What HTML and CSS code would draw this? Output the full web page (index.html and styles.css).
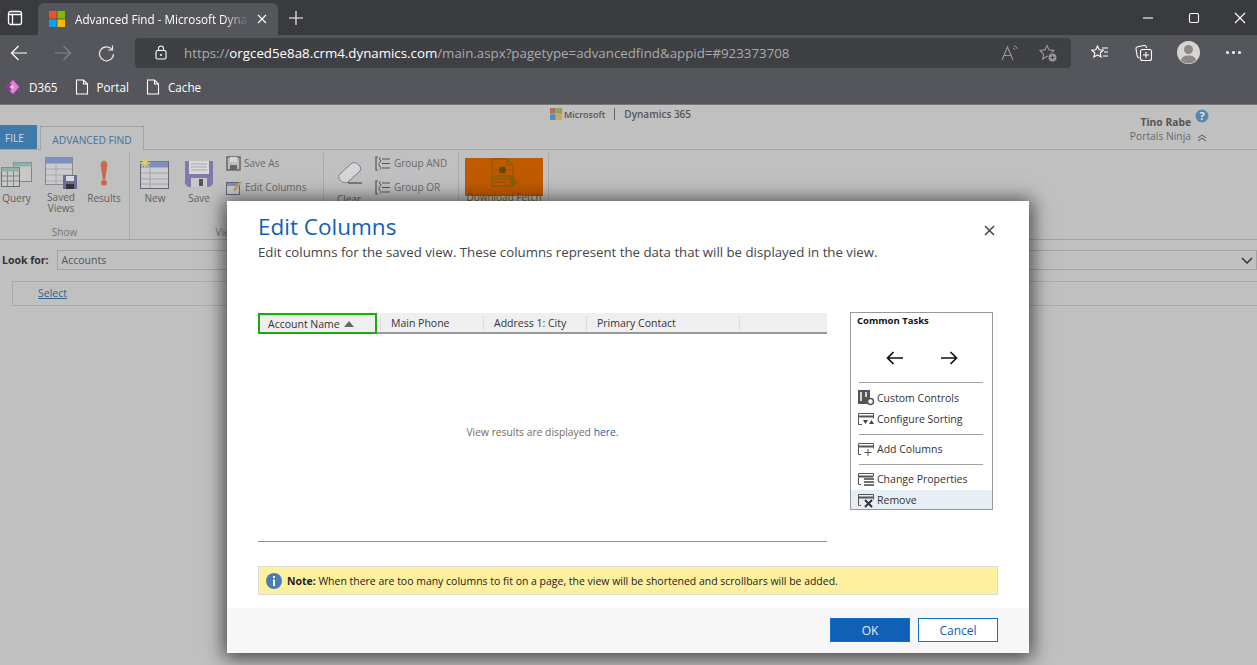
FILE: index.html
```html
<!DOCTYPE html>
<html lang="en">
<head>
<meta charset="utf-8">
<title>Advanced Find - Microsoft Dynamics 365</title>
<link rel="stylesheet" href="styles.css">
</head>
<body>
<div class="browser">
  <div class="tabstrip">
    <svg class="tabs-btn" width="16" height="16" viewBox="0 0 16 16"><rect x="1.5" y="1.5" width="13" height="13" rx="2" fill="none" stroke="#fff" stroke-width="1.3"/><path d="M1.5 4.5h13M5.5 4.5v10" stroke="#fff" stroke-width="1.3" fill="none"/></svg>
    <div class="tab">
      <svg class="favicon" width="16" height="16" viewBox="0 0 16 16"><rect width="7.5" height="7.5" fill="#f25022"/><rect x="8.5" width="7.5" height="7.5" fill="#7fba00"/><rect y="8.5" width="7.5" height="7.5" fill="#00a4ef"/><rect x="8.5" y="8.5" width="7.5" height="7.5" fill="#ffb900"/></svg>
      <span class="tab-title">Advanced Find - Microsoft Dynamics 365</span>
      <svg class="tab-close" width="10" height="10" viewBox="0 0 10 10"><path d="M1 1l8 8M9 1l-8 8" stroke="#fff" stroke-width="1.1"/></svg>
    </div>
    <svg class="newtab" width="16" height="16" viewBox="0 0 16 16"><path d="M8 1v14M1 8h14" stroke="#fff" stroke-width="1.1"/></svg>
    <div class="winctl">
      <svg width="12" height="12" viewBox="0 0 12 12"><path d="M1 6h10" stroke="#fff" stroke-width="1.1"/></svg>
      <svg width="12" height="12" viewBox="0 0 12 12"><rect x="1.5" y="1.5" width="9" height="9" rx="1.5" fill="none" stroke="#fff" stroke-width="1.1"/></svg>
      <svg width="12" height="12" viewBox="0 0 12 12"><path d="M1 1l10 10M11 1L1 11" stroke="#fff" stroke-width="1.1"/></svg>
    </div>
  </div>
  <div class="toolbar">
    <svg class="nav" width="18" height="18" viewBox="0 0 18 18"><path d="M17 9H1.5M8.5 2L1.5 9l7 7" fill="none" stroke="#fff" stroke-width="1.2"/></svg>
    <svg class="nav" width="18" height="18" viewBox="0 0 18 18"><path d="M1 9h15.5M9.5 2l7 7-7 7" fill="none" stroke="#85868a" stroke-width="1.2"/></svg>
    <svg class="nav" width="18" height="18" viewBox="0 0 18 18"><path d="M14.5 1.5V6H10M15.500 10A7 7 0 1 1 14 5.500" fill="none" stroke="#e8e8e8" stroke-width="1.2"/></svg>
    <div class="address">
      <svg class="lock" width="12" height="15" viewBox="0 0 12 15"><rect x="1" y="5.5" width="10" height="8.5" rx="1.5" fill="none" stroke="#fff" stroke-width="1.1"/><path d="M3.5 5.5V3.5a2.5 2.5 0 0 1 5 0v2" fill="none" stroke="#fff" stroke-width="1.1"/><circle cx="6" cy="10" r="1" fill="#fff"/></svg>
      <div class="url"><span class="dim">https://</span><span class="host">orgced5e8a8.crm4.dynamics.com</span><span class="dim">/main.aspx?pagetype=advancedfind&amp;appid=#923373708</span></div>
      <svg class="addr-ic" width="18" height="18" viewBox="0 0 18 18"><path d="M1 16L6.5 3 12 16M3 11.5h7" fill="none" stroke="#99999c" stroke-width="1.1"/><path d="M12 4a3 3 0 0 1 2 2M13 1.5a6 6 0 0 1 3.5 3.5" fill="none" stroke="#99999c" stroke-width="1"/></svg>
      <svg class="addr-ic" width="18" height="18" viewBox="0 0 18 18"><path d="M8 1.500l2.100 4.400 4.900.6-3.600 3.300 1 4.700L8 12.200l-4.400 2.800 1-4.700L1 6.500l4.900-.6z" fill="none" stroke="#99999c" stroke-width="1.1"/><circle cx="13.500" cy="13.500" r="4.500" fill="#99999c" stroke="#3f4044"/><path d="M13.500 11.500v4M11.500 13.500h4" stroke="#3f4044" stroke-width="1"/></svg>
    </div>
    <svg class="tool" width="18" height="18" viewBox="0 0 18 18"><path d="M6.500 2l1.700 3.800 4 .4-3 2.800.9 4-3.600-2-3.600 2 .9-4-3-2.800 4-.4z" fill="none" stroke="#fff" stroke-width="1.1"/><path d="M11 4h6M13 8h4M12 12h5" stroke="#fff" stroke-width="1.1"/></svg>
    <svg class="tool tool-c" width="18" height="18" viewBox="0 0 18 18"><rect x="5.5" y="5.5" width="11" height="11" rx="2" fill="none" stroke="#fff" stroke-width="1.1"/><path d="M11 8v6M8 11h6" stroke="#fff" stroke-width="1.1"/><path d="M4.500 14C3 14 2.500 13 2.200 12L1 5c-.2-1.200.5-2 1.500-2.200L9 1.500c1.200-.2 2 .3 2.300 1.500l.2 1" fill="none" stroke="#fff" stroke-width="1.1"/></svg>
    <svg class="avatar" width="23" height="23" viewBox="0 0 23 23"><circle cx="11.5" cy="11.5" r="11.5" fill="#d6d5d2"/><circle cx="11.5" cy="8.5" r="4.5" fill="#8d8a85"/><path d="M3.800 19.500C5 15.500 8 14.500 11.500 14.500s6.500 1 7.700 5A11.500 11.500 0 0 1 3.800 19.500z" fill="#8d8a85"/></svg>
    <div class="more"><i></i><i></i><i></i></div>
  </div>
  <div class="bookmarks">
    <div class="bm">
      <svg width="16" height="16" viewBox="0 0 16 16"><path d="M8 0l8 8-8 8-8-8z" fill="#8f3a98"/><path d="M5 4l3-3 6 7-6 7-3-3 4-4z" fill="#d987d0"/><path d="M7 5.500L9.500 8 7 10.500 4.500 8z" fill="#eeb4e4"/></svg>
      <span>D365</span>
    </div>
    <div class="bm">
      <svg width="14" height="16" viewBox="0 0 14 16"><path d="M1.500 1h7L12.500 5v10h-11zM8.500 1v4h4" fill="none" stroke="#fff" stroke-width="1.1"/></svg>
      <span>Portal</span>
    </div>
    <div class="bm">
      <svg width="14" height="16" viewBox="0 0 14 16"><path d="M1.500 1h7L12.500 5v10h-11zM8.500 1v4h4" fill="none" stroke="#fff" stroke-width="1.1"/></svg>
      <span>Cache</span>
    </div>
  </div>
</div>

<div class="app">
  <div class="app-top">
    <div class="brand">
      <svg width="12" height="12" viewBox="0 0 12 12"><rect width="5.700" height="5.700" fill="#b66f5c"/><rect x="6.300" width="5.700" height="5.700" fill="#8da25b"/><rect y="6.300" width="5.700" height="5.700" fill="#4d90b6"/><rect x="6.300" y="6.300" width="5.700" height="5.700" fill="#c9a75a"/></svg>
      <span class="ms">Microsoft</span><span class="pipe"></span><span class="d365">Dynamics 365</span>
    </div>
    <div class="user">
      <div class="user-text"><b>Tino Rabe</b><span>Portals Ninja</span></div>
      <div class="user-ic">
        <svg width="14" height="14" viewBox="0 0 14 14"><circle cx="7" cy="7" r="6.5" fill="#5b86ae"/><text x="7" y="10.800" class="qmark" text-anchor="middle">?</text></svg>
        <svg width="10" height="8" viewBox="0 0 10 8"><path d="M1 4l4-3 4 3M1 7l4-3 4 3" fill="none" stroke="#555" stroke-width="1"/></svg>
      </div>
    </div>
  </div>
  <div class="tabrow">
    <div class="t-file">FILE</div>
    <div class="t-adv">ADVANCED FIND</div>
  </div>
  <div class="ribbon">
    <div class="group g-show">
      <div class="g-items">
        <div class="big big-q">
          <svg width="32" height="32" viewBox="0 0 32 32"><rect x="12.5" y="4.5" width="18" height="19" fill="#c8c8c4" stroke="#6f8c88"/><rect x="12.5" y="4.5" width="18" height="4" fill="#8fb0ab"/><rect x=".5" y="9.5" width="18" height="19" fill="#c8c8c4" stroke="#5f7471"/><rect x=".5" y="9.5" width="18" height="4" fill="#8fb0ab"/><path d="M1 18h17M1 23h17M6.500 13v15M12.500 13v15" stroke="#7a8a88" fill="none"/></svg>
          <span>Query</span>
        </div>
        <div class="big big-sv">
          <svg width="33" height="32" viewBox="0 0 33 32"><rect x=".5" y=".5" width="27" height="27" fill="#c9cbcf" stroke="#88898d"/><rect x=".5" y=".5" width="27" height="6" fill="#7e8fbd"/><path d="M1 12h26M1 18h26M1 24h26M11 7v20" stroke="#a9aaae"/><rect x="18" y="18" width="14" height="14" fill="#6d6b9c"/><rect x="21" y="19" width="8" height="5" fill="#d8d8d8"/><rect x="21" y="27" width="8" height="5" fill="#333"/></svg>
          <span>Saved<br>Views</span>
        </div>
        <div class="big big-r">
          <svg width="10" height="27" viewBox="0 0 12 32"><path d="M2 6c0-7 8-7 8 0l-2.500 17h-3z" fill="#c96a4c"/><circle cx="6" cy="27" r="3.500" fill="#c96a4c"/></svg>
          <span>Results</span>
        </div>
      </div>
      <div class="g-label">Show</div>
    </div>
    <div class="group g-view">
      <div class="g-items">
        <div class="big big-n">
          <svg width="30" height="32" viewBox="0 0 30 32"><rect x=".5" y="3.5" width="28" height="27" fill="#c9cbcf" stroke="#667"/><rect x="1" y="3.5" width="27" height="6" fill="#7e8fbd"/><path d="M1 15h27M1 21h27M1 26h27M10 10v20" stroke="#a2a4a8"/><path d="M5 0v10M0 5h10M1.500 1.500l7 7M8.500 1.500l-7 7" stroke="#d8cf72" stroke-width="1.5"/></svg>
          <span>New</span>
        </div>
        <div class="big big-s">
          <svg width="28" height="28" viewBox="0 0 28 28"><path d="M0 1h28v23l-3 3H3l-3-3z" fill="#7d7bab"/><rect x="4" y="1" width="20" height="13" fill="#d8d8d8"/><path d="M6 4h16M6 7h16M6 10h16" stroke="#aaa"/><rect x="6" y="18" width="16" height="9" fill="#c8c8c8"/><rect x="14" y="19" width="4" height="7" fill="#555"/></svg>
          <span>Save</span>
        </div>
        <div class="stack">
          <div class="small">
            <svg width="15" height="15" viewBox="0 0 15 15"><path d="M1 1h13v13H1z" fill="#bdbdbd" stroke="#666" stroke-width="1.5"/><rect x="4" y="1" width="7" height="5" fill="#d5d5d5"/><rect x="4" y="9" width="7" height="5" fill="#666"/></svg>
            <span>Save As</span>
          </div>
          <div class="small">
            <svg width="16" height="15" viewBox="0 0 16 15"><rect x=".5" y="2.5" width="13" height="12" fill="#c6cad2" stroke="#667"/><rect x="1" y="3" width="12" height="3" fill="#7e8fbd"/><path d="M7 10l7-9 2 1.500-7 9z" fill="#c79a5c"/></svg>
            <span>Edit Columns</span>
          </div>
        </div>
      </div>
      <div class="g-label">View</div>
    </div>
    <div class="group g-query">
      <div class="g-items">
        <div class="big big-c">
          <svg width="27" height="26" viewBox="0 0 27 26"><path d="M3 14L16 2c2-1 5 0 7 2s2 5 1 6L12 21c-2 1-5 1-7-1s-3-4-2-6z" fill="#d4d6da" stroke="#7c7e84"/><path d="M12 22h14" stroke="#333"/></svg>
          <span>Clear</span>
        </div>
        <div class="stack">
          <div class="small">
            <svg width="16" height="15" viewBox="0 0 16 15"><path d="M3 1H1v13h2M7 3h8M7 7.500h8M7 12h8" fill="none" stroke="#555" stroke-width="1.2"/><path d="M5.500 1.500C4 1.500 4 4 5.500 4S4 7.500 4 7.500 4 11 5.500 11 4 13.500 5.500 13.500" fill="none" stroke="#555"/></svg>
            <span>Group AND</span>
          </div>
          <div class="small">
            <svg width="16" height="15" viewBox="0 0 16 15"><path d="M3 1H1v13h2M7 3h8M7 7.500h8M7 12h8" fill="none" stroke="#555" stroke-width="1.2"/><path d="M5.500 1.500C4 1.500 4 4 5.500 4S4 7.500 4 7.500 4 11 5.500 11 4 13.500 5.500 13.500" fill="none" stroke="#555"/></svg>
            <span>Group OR</span>
          </div>
        </div>
      </div>
    </div>
    <div class="group g-dl">
      <div class="dl-box">
        <svg width="27" height="30" viewBox="0 0 27 30"><path d="M1 1h15l6 6v21H1zM16 1v6h6" fill="none" stroke="#7a5a00"/><path d="M4 12h2M17 12h2M3 18h17M3 21h17M3 24h12" stroke="#7a5a00"/><circle cx="11.5" cy="12" r="3.5" fill="#5d4b08"/><path d="M19 17c4 0 5 3 5 6h3l-5 6-5-6h3c0-2-1-3-2-3z" fill="#7f6200"/></svg>
        <span>Download Fetch</span>
      </div>
    </div>
  </div>
  <div class="lookfor">
    <b>Look for:</b>
    <div class="lf-select"><span>Accounts</span>
      <svg width="12" height="7" viewBox="0 0 12 7"><path d="M1 1l5 5 5-5" fill="none" stroke="#333" stroke-width="1.5"/></svg>
    </div>
  </div>
  <div class="selectbox"><a class="select-link" href="#">Select</a></div>
</div>

<div class="dialog">
  <div class="d-main">
    <div class="d-head">
      <div>
        <h1>Edit Columns</h1>
        <p>Edit columns for the saved view. These columns represent the data that will be displayed in the view.</p>
      </div>
      <svg class="d-close" width="11" height="11" viewBox="0 0 11 11"><path d="M1 1l9 9M10 1l-9 9" stroke="#444" stroke-width="1.5"/></svg>
    </div>
    <div class="d-body">
      <div class="grid">
        <div class="g-head">
          <div class="col col-a">Account Name <i class="sort"></i></div>
          <div class="col col-b">Main Phone</div>
          <div class="col col-c">Address 1: City</div>
          <div class="col col-d">Primary Contact</div>
        </div>
        <div class="g-empty">View results are displayed <span class="here">here.</span></div>
      </div>
      <div class="tasks">
        <div class="t-title">Common Tasks</div>
        <div class="t-arrows">
          <svg width="18" height="14" viewBox="0 0 18 14"><path d="M17 7H1.500M7.500 1L1.500 7l6 6" fill="none" stroke="#111" stroke-width="1.7"/></svg>
          <svg width="18" height="14" viewBox="0 0 18 14"><path d="M1 7h15.500M10.500 1l6 6-6 6" fill="none" stroke="#111" stroke-width="1.7"/></svg>
        </div>
        <div class="t-sep"></div>
        <div class="t-item">
          <svg width="17" height="16" viewBox="0 0 17 16"><rect width="12" height="14" fill="#555"/><path d="M3 2v9M8 2v5" stroke="#fff" stroke-width="1.5"/><circle cx="12.5" cy="11.5" r="3" fill="#fff" stroke="#555" stroke-width="1.5"/></svg>
          <span>Custom Controls</span>
        </div>
        <div class="t-item">
          <svg width="17" height="16" viewBox="0 0 17 16"><path d="M4 13.500H.5v-11h15v5" fill="none" stroke="#555"/><path d="M1 5.500h14" stroke="#555" stroke-width="2"/><path d="M5 9h5l-2.500 4zM11 13h5l-2.500-4z" fill="#444"/></svg>
          <span>Configure Sorting</span>
        </div>
        <div class="t-sep t-sep2"></div>
        <div class="t-item">
          <svg width="17" height="16" viewBox="0 0 17 16"><path d="M3 13.500H.5v-11h15v5" fill="none" stroke="#555"/><path d="M1 5.500h14" stroke="#555" stroke-width="2"/><path d="M10 8v7M6.500 11.500h7" stroke="#555"/></svg>
          <span>Add Columns</span>
        </div>
        <div class="t-sep t-sep2"></div>
        <div class="t-item">
          <svg width="17" height="16" viewBox="0 0 17 16"><path d="M3 13.500H.5v-11h15v3" fill="none" stroke="#555"/><path d="M1 5.500h14" stroke="#555" stroke-width="2"/><path d="M6 8h10M6 11h10M6 14h10" stroke="#444" stroke-width="1.5"/></svg>
          <span>Change Properties</span>
        </div>
        <div class="t-item t-hover">
          <svg width="17" height="16" viewBox="0 0 17 16"><path d="M3 13.500H.5v-11h15v5" fill="none" stroke="#555"/><path d="M1 5.500h14" stroke="#555" stroke-width="2"/><path d="M7 8l7 7M14 8l-7 7" stroke="#333" stroke-width="2"/></svg>
          <span>Remove</span>
        </div>
      </div>
    </div>
    <div class="note">
      <svg width="16" height="16" viewBox="0 0 16 16"><circle cx="8" cy="8" r="8" fill="#4a7db5"/><rect x="7" y="6.5" width="2" height="6.5" fill="#fff"/><rect x="7" y="3" width="2" height="2" fill="#fff"/></svg>
      <span><b>Note:</b> When there are too many columns to fit on a page, the view will be shortened and scrollbars will be added.</span>
    </div>
  </div>
  <div class="d-foot">
    <button class="btn btn-ok">OK</button>
    <button class="btn btn-cancel">Cancel</button>
  </div>
</div>
</body>
</html>
```

FILE: styles.css
```css
* { box-sizing: border-box; }
html, body { margin: 0; height: 100%; }
body {
  width: 1257px;
  height: 665px;
  overflow: hidden;
  display: flex;
  flex-direction: column;
  background: #c0c0c0;
  font-family: "Open Sans", "Noto Sans", sans-serif;
  position: relative;
}

/* Browser chrome */
.browser { flex: none; color: #fff; }
.tabstrip {
  height: 35px;
  background: #3a3b3f;
  display: flex;
  align-items: center;
  padding: 3px 0 0 7px;
}
.tabs-btn { flex: none; margin-top: -3px; }
.tab {
  width: 240px;
  height: 32px;
  margin-left: 15px;
  background: #55565b;
  border-radius: 6px 6px 0 0;
  display: flex;
  align-items: center;
  padding: 0 11px;
  font-size: 11.7px;
}
.favicon { flex: none; margin-right: 10px; }
.tab-title {
  flex: 1;
  overflow: hidden;
  white-space: nowrap;
  -webkit-mask-image: linear-gradient(to right, #000 85%, transparent);
  mask-image: linear-gradient(to right, #000 85%, transparent);
}
.tab-close { flex: none; margin-left: 8px; }
.newtab { flex: none; margin-left: 10px; margin-top: -3px; }
.winctl { margin-left: auto; margin-top: -3px; display: flex; gap: 34px; padding-right: 11px; }
.toolbar {
  height: 35px;
  background: #55565b;
  display: flex;
  align-items: center;
  padding-left: 10px;
}
.nav { flex: none; margin-right: 26px; }
.address {
  width: 936px;
  height: 30px;
  margin-left: -7px;
  background: #3f4044;
  border-radius: 4px;
  display: flex;
  align-items: center;
  padding: 0 14px 0 20px;
}
.lock { flex: none; margin-right: 17px; }
.url { flex: 1; font-size: 13.3px; white-space: nowrap; }
.dim { color: #aaabae; }
.host { color: #fff; }
.addr-ic { flex: none; margin-left: 20px; }
.tool { flex: none; margin-left: 20px; }
.tool-c { margin-left: 26px; }
.avatar { flex: none; margin-left: 24px; }
.more { display: flex; gap: 3px; margin-left: 26px; }
.more i { width: 3px; height: 3px; background: #fff; border-radius: 50%; display: block; }
.bookmarks {
  height: 35px;
  background: #55565b;
  display: flex;
  align-items: center;
  gap: 17px;
  padding-left: 5px;
  font-size: 11.7px;
  border-bottom: 1px solid #77787b;
}
.bm { display: flex; align-items: center; gap: 8px; }

/* App behind the dialog */
.app { flex: 1; display: flex; flex-direction: column; color: #555; font-size: 10px; min-height: 0; }
.app-top { height: 21px; position: relative; display: flex; justify-content: center; }
.brand { display: flex; align-items: center; height: 18px; margin-left: -16px; }
.ms { font-size: 9px; font-weight: 600; margin-left: 2px; color: #555; }
.pipe { width: 1px; height: 12px; background: #666; margin: 0 9px; }
.d365 { font-size: 10px; font-weight: 600; color: #555; }
.user { position: absolute; right: 48px; top: 4px; display: flex; gap: 4px; }
.user-text { display: flex; flex-direction: column; align-items: flex-end; margin-top: 6px; line-height: 14px; }
.user-text b { color: #555; font-size: 10.3px; }
.user-text span { color: #6a6a6a; font-size: 10.3px; }
.user-ic { display: flex; flex-direction: column; align-items: center; gap: 11px; }
.qmark { font: 700 11px "Open Sans", sans-serif; fill: #d8e2ec; }
.tabrow {
  height: 24px;
  display: flex;
  align-items: flex-end;
  border-bottom: 1px solid #a3a3a3;
  font-size: 10px;
}
.t-file { width: 37px; height: 24px; background: #3f7aab; color: #d6dde4; display: flex; align-items: center; padding: 2px 0 0 5px; }
.t-adv { width: 104px; height: 24px; margin: 0 0 -1px 3px; border: 1px solid #a3a3a3; border-bottom: 0; background: #c0c0c0; color: #41739f; display: flex; align-items: center; justify-content: center; padding-top: 2px; font-size: 10.2px; }
.ribbon { height: 90px; display: flex; border-bottom: 1px solid #a3a3a3; padding-top: 3px; }
.group { position: relative; border-right: 1px solid #ababab; height: 86px; display: flex; flex-direction: column; }
.g-show { width: 130px; }
.g-view { width: 194px; }
.g-query { width: 135px; }
.g-dl { width: 90px; padding: 5px 0 0 6px; }
.g-items { flex: 1; display: flex; }
.g-label { height: 14px; text-align: center; color: #757575; }
.big { display: flex; flex-direction: column; align-items: center; line-height: 11px; color: #5f5f5f; text-align: center; }
.big svg { margin-bottom: 3px; }
.big-q { width: 33px; padding-top: 5px; margin-right: 9px; }
.big-sv { width: 38px; padding-top: 4px; margin-right: 5px; }
.big-r { width: 38px; padding-top: 7px; }
.big-r svg { margin-bottom: 6px; }
.big-n { width: 42px; padding-top: 5px; margin-left: 4px; }
.big-s { width: 40px; padding-top: 7px; margin-left: 3px; }
.big-s svg { margin-bottom: 5px; }
.big-c { width: 50px; padding-top: 8px; }
.big-c svg { margin-bottom: 7px; }
.stack { display: flex; flex-direction: column; gap: 8px; padding-top: 2px; margin-left: 7px; }
.g-query .stack { margin-left: 1px; }
.small { display: flex; align-items: center; gap: 3px; height: 16px; color: #6a6a6a; white-space: nowrap; font-size: 10px; }
.dl-box { width: 78px; height: 38px; background: #bf5a00; display: flex; flex-direction: column; align-items: center; gap: 2px; font-size: 10px; color: #6a5a20; white-space: nowrap; }
.dl-box svg { flex: none; }
.dl-box span { flex: none; }
.lookfor { height: 41px; display: flex; align-items: flex-start; padding: 10px 0 0 2px; gap: 8px; font-size: 10.5px; color: #333; }
.lookfor b { margin-top: 3px; }
.lf-select { flex: 1; height: 20px; border: 1px solid #a3a3a3; display: flex; align-items: center; justify-content: space-between; padding: 0 3px 0 4px; color: #555; }
.selectbox { margin-left: 12px; height: 25px; border: 1px solid #a9a9a9; border-right: 0; padding: 4px 0 0 25px; font-size: 10.5px; }
.select-link { color: #33628f; }

/* Dialog */
.dialog {
  position: absolute;
  left: 227px;
  top: 201px;
  width: 802px;
  height: 452px;
  background: #fff;
  box-shadow: 0 2px 18px 3px rgba(0,0,0,.65);
  display: flex;
  flex-direction: column;
}
.d-main { flex: 1; padding: 0 31px 0; display: flex; flex-direction: column; min-height: 0; }
.d-head { display: flex; justify-content: space-between; height: 111px; padding-top: 9px; }
h1 { margin: 0; font-size: 22.5px; font-weight: 400; color: #1160b7; line-height: 34px; }
.d-head p { margin: 0; font-size: 13.25px; line-height: 17px; color: #444; white-space: nowrap; }
.d-close { margin: 15px 3px 0 0; }
.d-body { display: flex; height: 254px; justify-content: space-between; padding-right: 5px; }
.grid { width: 569px; height: 229px; border-bottom: 1px solid #8f8f8f; margin-top: 1px; display: flex; flex-direction: column; }
.g-head { height: 21px; background: #efefef; border-bottom: 2px solid #999; display: flex; font-size: 10.5px; color: #333; }
.col { height: 19px; display: flex; align-items: center; padding-left: 8px; position: relative; white-space: nowrap; }
.col::after { content: ""; position: absolute; right: -1px; top: 3px; bottom: 1px; width: 1px; background: #dcdcdc; }
.col-a { width: 119px; height: 21px; margin-right: 3px; border: 2px solid #1fa80f; }
.col-a::after { right: -6px; }
.col-b { width: 103px; padding-left: 11px; }
.col-c { width: 103px; padding-left: 11px; }
.col-d { width: 153px; padding-left: 11px; }
.sort { display: inline-block; width: 0; height: 0; border: 5px solid transparent; border-top: 0; border-bottom: 6px solid #666; margin-left: 4px; }
.g-empty { flex: 1; display: flex; align-items: center; justify-content: center; gap: 3px; color: #7a6a58; font-size: 10.3px; padding-bottom: 12px; }
.here { color: #1160b7; }
.tasks { width: 143px; height: 198px; border: 1px solid #999; font-size: 10.5px; color: #333; display: flex; flex-direction: column; }
.t-title { font-weight: 700; font-size: 9.5px; color: #111; padding: 2px 0 0 6px; line-height: 12px; height: 15px; }
.t-arrows { height: 57px; display: flex; justify-content: center; gap: 36px; align-items: center; padding-top: 7px; }
.t-sep { height: 1px; background: #a0a0a0; margin: 0 9px 4px 8px; flex: none; }
.t-sep2 { margin-top: 5px; margin-bottom: 3px; }
.t-item { height: 21px; display: flex; align-items: center; gap: 2px; padding-left: 7px; flex: none; }
.t-hover { background: #e6eef5; height: 19px; margin-top: 1px; }
.note { height: 29px; background: #fff0a0; border: 1px solid #dcdcdc; display: flex; align-items: center; padding-left: 7px; gap: 5px; font-size: 10.47px; color: #222; flex: none; }
.d-foot { height: 45px; background: #f7f7f7; display: flex; justify-content: flex-end; gap: 8px; padding: 10px 31px 0 0; flex: none; }
.btn { width: 80px; height: 24px; font: 12px "Open Sans", sans-serif; padding: 0; border: 1px solid #0f72c8; border-radius: 0; }
.btn-ok { background: #1160b7; color: #e6eef8; }
.btn-cancel { background: #fff; color: #1160b7; }
```
